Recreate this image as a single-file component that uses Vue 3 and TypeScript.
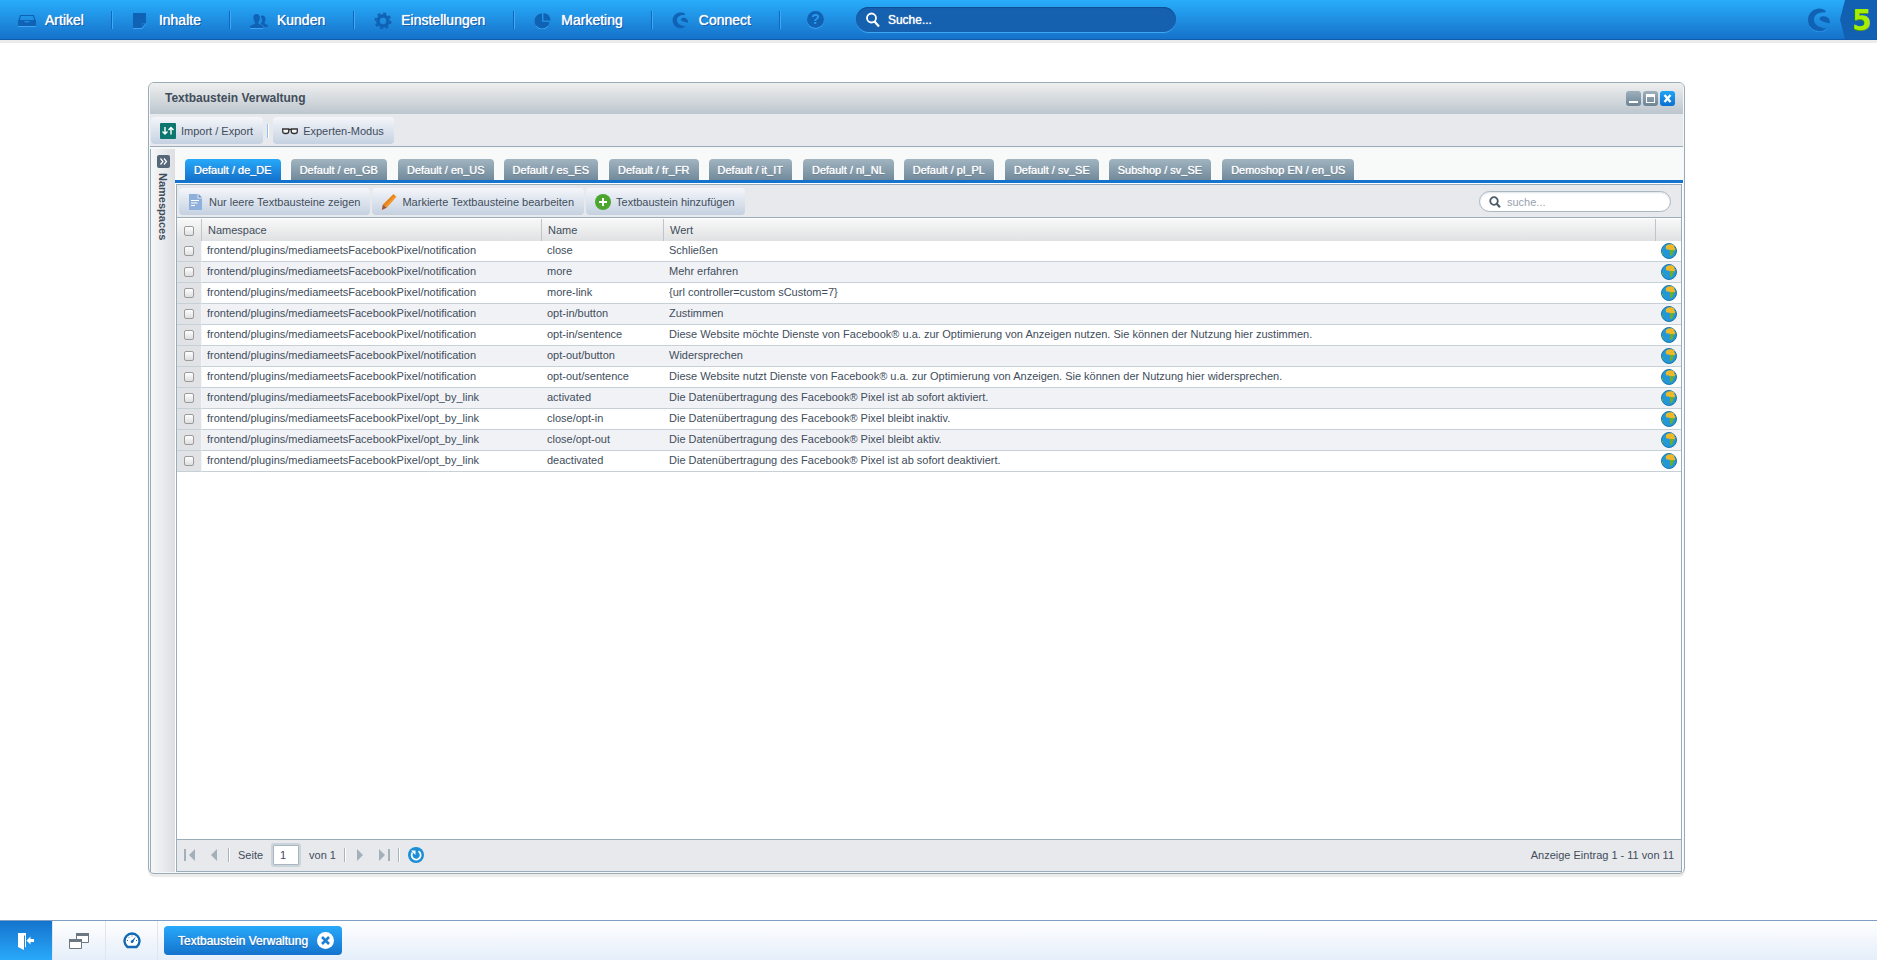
<script setup lang="ts">
import { ref } from 'vue'

interface NavItem {
  label: string
  icon: string
}

interface Snippet {
  namespace: string
  name: string
  value: string
}

const navItems: NavItem[] = [
  { label: 'Artikel', icon: 'inbox' },
  { label: 'Inhalte', icon: 'note' },
  { label: 'Kunden', icon: 'users' },
  { label: 'Einstellungen', icon: 'gear' },
  { label: 'Marketing', icon: 'pie' },
  { label: 'Connect', icon: 'swirl' },
]

const tabs: string[] = [
  'Default / de_DE',
  'Default / en_GB',
  'Default / en_US',
  'Default / es_ES',
  'Default / fr_FR',
  'Default / it_IT',
  'Default / nl_NL',
  'Default / pl_PL',
  'Default / sv_SE',
  'Subshop / sv_SE',
  'Demoshop EN / en_US',
]
const activeTab = ref(0)

const notification = 'frontend/plugins/mediameetsFacebookPixel/notification'
const optByLink = 'frontend/plugins/mediameetsFacebookPixel/opt_by_link'

const snippets: Snippet[] = [
  { namespace: notification, name: 'close', value: 'Schließen' },
  { namespace: notification, name: 'more', value: 'Mehr erfahren' },
  { namespace: notification, name: 'more-link', value: '{url controller=custom sCustom=7}' },
  { namespace: notification, name: 'opt-in/button', value: 'Zustimmen' },
  { namespace: notification, name: 'opt-in/sentence', value: 'Diese Website möchte Dienste von Facebook® u.a. zur Optimierung von Anzeigen nutzen. Sie können der Nutzung hier zustimmen.' },
  { namespace: notification, name: 'opt-out/button', value: 'Widersprechen' },
  { namespace: notification, name: 'opt-out/sentence', value: 'Diese Website nutzt Dienste von Facebook® u.a. zur Optimierung von Anzeigen. Sie können der Nutzung hier widersprechen.' },
  { namespace: optByLink, name: 'activated', value: 'Die Datenübertragung des Facebook® Pixel ist ab sofort aktiviert.' },
  { namespace: optByLink, name: 'close/opt-in', value: 'Die Datenübertragung des Facebook® Pixel bleibt inaktiv.' },
  { namespace: optByLink, name: 'close/opt-out', value: 'Die Datenübertragung des Facebook® Pixel bleibt aktiv.' },
  { namespace: optByLink, name: 'deactivated', value: 'Die Datenübertragung des Facebook® Pixel ist ab sofort deaktiviert.' },
]

const page = ref('1')
</script>

<template>
  <div class="backend">
    <header class="menubar">
      <nav class="menu">
        <a v-for="item in navItems" :key="item.label" class="menu-item" href="#">
          <svg class="menu-icon" viewBox="0 0 18 18" aria-hidden="true">
            <g v-if="item.icon === 'inbox'">
              <path d="M2.500 4.500h13l1.500 5H1z" fill="none" stroke="#1062b5" stroke-width="1.200" />
              <path d="M0 9h5.500c.5 2 1.500 2.500 3.500 2.500S12 11 12.500 9H18v6H0z" fill="#1062b5" />
              <path d="M0 15.500h18" stroke="#3fa5f2" />
            </g>
            <g v-else-if="item.icon === 'note'">
              <path d="M1 2h13v10h-4v5H1z" fill="#1062b5" />
              <path d="M10.500 12.500h3.500L10.500 16.500z" fill="#1062b5" />
              <path d="M1 17.500h9l4-5" fill="none" stroke="#3fa5f2" />
            </g>
            <g v-else-if="item.icon === 'users'" fill="#1062b5">
              <path d="M0 17v-2l4.500-2c.8-.5.8-1.500 0-2.500C2.500 7.500 3 3 6.500 3s4.500 4.500 2.300 7.500c-.8 1-.8 2 0 2.500l4.200 2v2z" />
              <path d="M10.500 5c2.500-1.500 5.500 0 5 4-.2 1.200-1 2-1 3 0 .8 3.500 1.500 3.500 3V16h-4l-.5-1.500-3-1.500c2.300-2.500 2-5.500 0-8z" />
              <path d="M0 17.500h13" stroke="#3fa5f2" />
            </g>
            <g v-else-if="item.icon === 'gear'" fill="none" stroke="#1062b5">
              <circle cx="9" cy="10" r="5" stroke-width="3.500" />
              <circle cx="9" cy="10" r="7.500" stroke-width="2" stroke-dasharray="3 2.890" />
            </g>
            <g v-else-if="item.icon === 'pie'" fill="#1062b5">
              <path d="M8 2.500a7.500 7.500 0 1 0 7.500 8.500H8z" />
              <path d="M9.500 2a7.500 7.500 0 0 1 7 7.500h-7z" />
              <path d="M2 15a7.500 7.500 0 0 0 12 0" fill="none" stroke="#3fa5f2" />
            </g>
            <g v-else fill="#1062b5" transform="translate(0 1) scale(.7)">
              <path d="M18.500 2.500A11.300 11.300 0 1 0 19.500 20.500C11 20 7 16 7 11.500S11 4 18.500 4.200z" />
              <path d="M13 9.500c2-2 7-2 9 1.500 1 2 1 3 .8 4.500-2.800-1-7.800-1.500-9.800-3.700-.6-.8-.6-1.600 0-2.300z" />
            </g>
          </svg>
          <span>{{ item.label }}</span>
        </a>
        <a class="menu-help" href="#" aria-label="Hilfe"><span class="help-mark">?</span></a>
      </nav>
      <label class="global-search">
        <svg viewBox="0 0 16 16" width="16" height="16" aria-hidden="true">
          <circle cx="6.500" cy="6" r="4.500" fill="none" stroke="#fff" stroke-width="1.800" />
          <path d="M9.500 9.500l4.500 5" stroke="#fff" stroke-width="2.200" />
        </svg>
        <input type="text" placeholder="Suche..." aria-label="Suche" />
      </label>
      <svg class="brand-swirl" viewBox="0 0 24 24" aria-hidden="true">
        <path d="M3 19c4 5 10 6 16.500 2.500" fill="none" stroke="#2d97ea" />
        <path d="M18.500 2.500A11.300 11.300 0 1 0 19.500 20.500C11 20 7 16 7 11.500S11 4 18.500 4.200z" fill="#1062b5" />
        <path d="M13 9.500c2-2 7-2 9 1.500 1 2 1 3 .8 4.500-2.800-1-7.800-1.500-9.800-3.700-.6-.8-.6-1.600 0-2.300z" fill="#1062b5" />
      </svg>
      <div class="brand-five">5</div>
    </header>

    <main class="desktop">
      <section class="window">
        <div class="titlebar">
          <h1>Textbaustein Verwaltung</h1>
          <div class="window-tools">
            <button type="button" aria-label="Minimieren">
              <svg viewBox="0 0 15 15"><path d="M3 11h9" stroke="#fff" stroke-width="2" /></svg>
            </button>
            <button type="button" aria-label="Maximieren">
              <svg viewBox="0 0 15 15"><path d="M3 3h9v9H3zM4 6h7v5H4z" fill="#fff" fill-rule="evenodd" /></svg>
            </button>
            <button type="button" class="close" aria-label="Schließen">
              <svg viewBox="0 0 15 15"><path d="M4.500 4l6 7M10.500 4l-6 7" stroke="#fff" stroke-width="2.400" /></svg>
            </button>
          </div>
        </div>

        <div class="toolbar main-toolbar">
          <button type="button" class="tool">
            <svg viewBox="0 0 16 16" aria-hidden="true">
              <rect width="16" height="16" rx="1" fill="#0c766f" />
              <path d="M5 4v7M2.500 8.500L5 11l2.500-2.500M11 11.500V4.500M8.500 7L11 4.500 13.500 7" fill="none" stroke="#fff" stroke-width="1.400" />
            </svg>
            <span>Import / Export</span>
          </button>
          <span class="tool-divider"></span>
          <button type="button" class="tool">
            <svg viewBox="0 0 16 16" aria-hidden="true">
              <path d="M.7 6h6v2.500c0 1.300-1 2-2.500 2h-1C1.700 10.500.7 9.800.7 8.500zM9.300 6h6v2.500c0 1.300-1 2-2.500 2h-1c-1.500 0-2.500-.7-2.500-2zM6.500 7.200c.8-.7 2.200-.7 3 0" fill="#f4f6f8" stroke="#333" stroke-width="1.300" />
            </svg>
            <span>Experten-Modus</span>
          </button>
        </div>

        <div class="window-body">
          <aside class="side">
            <button type="button" class="expand" aria-label="Namespaces ausklappen">
              <svg viewBox="0 0 13 13"><path d="M3.500 3.500L6 6.500 3.500 9.500M7 3.500L9.500 6.500 7 9.500" fill="none" stroke="#fff" stroke-width="1.200" /></svg>
            </button>
            <span class="side-title">Namespaces</span>
          </aside>

          <div class="content">
            <div class="tabs" role="tablist">
              <button
                v-for="(tab, index) in tabs"
                :key="tab"
                type="button"
                role="tab"
                class="tab"
                :class="{ active: index === activeTab }"
                :aria-selected="index === activeTab"
                @click="activeTab = index"
              >{{ tab }}</button>
            </div>

            <div class="grid-panel">
              <div class="toolbar">
                <button type="button" class="tool">
                  <svg viewBox="0 0 16 16" aria-hidden="true">
                    <path d="M1 0h8.500v4.500H14V16H1z" fill="#8fb0da" />
                    <path d="M10.500 0L14 3.500h-3.500z" fill="#6f96c8" />
                    <path d="M3 6.500h8M3 9h6.500M3 11.500h4" stroke="#fff" stroke-width="1.200" />
                  </svg>
                  <span>Nur leere Textbausteine zeigen</span>
                </button>
                <button type="button" class="tool">
                  <svg viewBox="0 0 16 16" aria-hidden="true">
                    <path d="M12.500.2l3 2.500-9.700 11-4-3z" fill="#f0952b" />
                    <path d="M12.500.2l1.300 1.100-10 11-2-1.600z" fill="#e5841d" />
                    <path d="M1.800 10.700l4 3L.8 16z" fill="#9a5330" />
                  </svg>
                  <span>Markierte Textbausteine bearbeiten</span>
                </button>
                <button type="button" class="tool">
                  <svg viewBox="0 0 16 16" aria-hidden="true">
                    <circle cx="8" cy="8" r="8" fill="#4ca52d" />
                    <path d="M8 4v8M4 8h8" stroke="#fff" stroke-width="2" />
                  </svg>
                  <span>Textbaustein hinzufügen</span>
                </button>
                <label class="grid-search">
                  <svg viewBox="0 0 12 12" aria-hidden="true">
                    <circle cx="5" cy="5" r="3.800" fill="none" stroke="#4d5c69" stroke-width="1.800" />
                    <path d="M7.500 7.500l3.500 3.700" stroke="#4d5c69" stroke-width="2.200" />
                  </svg>
                  <input type="text" placeholder="suche..." aria-label="Textbausteine suchen" />
                </label>
              </div>

              <div class="table-area">
                <table>
                  <thead>
                    <tr>
                      <th class="col-check"><input type="checkbox" aria-label="Alle auswählen" /></th>
                      <th class="col-namespace">Namespace</th>
                      <th class="col-name">Name</th>
                      <th>Wert</th>
                      <th class="col-action"></th>
                    </tr>
                  </thead>
                  <tbody>
                    <tr v-for="row in snippets" :key="row.namespace + row.name">
                      <td class="col-check"><input type="checkbox" :aria-label="row.name + ' auswählen'" /></td>
                      <td>{{ row.namespace }}</td>
                      <td>{{ row.name }}</td>
                      <td>{{ row.value }}</td>
                      <td class="col-action">
                        <button type="button" class="globe" aria-label="Übersetzen">
                          <svg viewBox="0 0 16 16">
                            <circle cx="8" cy="8" r="7.500" fill="#2299d6" stroke="#1b74a8" />
                            <path d="M5 3l2-1.500 4-.3 2 1.300.5 2.500 1 .5-1.500 2.500H9.500L8 6.500H5.500L4.800 5z" fill="#efb827" />
                            <path d="M9 7h4.500L12 9.500l-.3 2-1.700 2-1-2zM1 8.500l1.200 1-.4 2.500-.8-2z" fill="#6fae2c" />
                          </svg>
                        </button>
                      </td>
                    </tr>
                  </tbody>
                </table>
              </div>

              <footer class="paging">
                <button type="button" aria-label="Erste Seite">
                  <svg viewBox="0 0 12 12"><path d="M0 0h2v12H0zM11 0v12L5 6z" fill="#a3b0b9" /></svg>
                </button>
                <button type="button" class="prev" aria-label="Vorherige Seite">
                  <svg viewBox="0 0 12 12"><path d="M9 0v12L3 6z" fill="#a3b0b9" /></svg>
                </button>
                <span class="paging-divider"></span>
                <label for="page-number">Seite</label>
                <input id="page-number" v-model="page" type="text" />
                <span>von 1</span>
                <span class="paging-divider"></span>
                <button type="button" class="next" aria-label="Nächste Seite">
                  <svg viewBox="0 0 12 12"><path d="M3 0v12l6-6z" fill="#a3b0b9" /></svg>
                </button>
                <button type="button" aria-label="Letzte Seite">
                  <svg viewBox="0 0 12 12"><path d="M1 0v12l6-6zM10 0h2v12h-2z" fill="#a3b0b9" /></svg>
                </button>
                <span class="paging-divider"></span>
                <button type="button" class="refresh" aria-label="Aktualisieren">
                  <svg viewBox="0 0 16 16">
                    <circle cx="8" cy="8" r="8" fill="#1a8fd6" />
                    <path d="M10.500 4.300a4.500 4.500 0 1 1-6 1.200" fill="none" stroke="#fff" stroke-width="1.800" />
                    <path d="M3 3.500h4.500V8z" fill="#fff" />
                  </svg>
                </button>
                <span class="paging-info">Anzeige Eintrag 1 - 11 von 11</span>
              </footer>
            </div>
          </div>
        </div>
      </section>
    </main>

    <footer class="taskbar">
      <button type="button" class="logout" aria-label="Abmelden">
        <svg viewBox="0 0 16 18">
          <path d="M0 1h8v14l-2 .5V18l-6-3z" fill="#fff" />
          <path d="M6.500 3.500V17" stroke="#1f8fe6" />
          <path d="M8.500 8.500l4-4V7H16v3h-3.500v2.500z" fill="#fff" />
        </svg>
      </button>
      <button type="button" class="task-tool" aria-label="Fenster anordnen">
        <svg viewBox="0 0 20 16" width="20" height="16">
          <path d="M7.500.5h12v9h-12z" fill="#fff" stroke="#6b7884" />
          <path d="M7 0h13v3H7z" fill="#6b7884" />
          <path d="M.5 6.500h12v9H.5z" fill="#fff" stroke="#6b7884" />
          <path d="M0 6h13v3H0z" fill="#6b7884" />
        </svg>
      </button>
      <button type="button" class="task-tool" aria-label="Dashboard">
        <svg viewBox="0 0 18 17" width="18" height="17">
          <path d="M4.500 15A7.500 7.500 0 1 1 13.500 15z" fill="#fff" stroke="#1367b3" stroke-width="2.400" />
          <path d="M4 8.500h1M5.500 5l.7.7M9 3.500v1M13 8.500h1" stroke="#1367b3" />
          <path d="M12.800 4.800L10 10.500 8.200 9z" fill="#1367b3" />
          <circle cx="9" cy="9.800" r="1.300" fill="#1367b3" />
        </svg>
      </button>
      <button type="button" class="task">
        <span>Textbaustein Verwaltung</span>
        <svg viewBox="0 0 17 17" aria-hidden="true">
          <circle cx="8.500" cy="8.500" r="8.500" fill="#fff" />
          <path d="M5 5l7 7M12 5l-7 7" stroke="#1b7fd6" stroke-width="2.600" />
        </svg>
      </button>
    </footer>
  </div>
</template>

<style>
body {
  margin: 0;
}
</style>

<style scoped>
.backend {
  display: flex;
  flex-direction: column;
  min-height: 100vh;
  background: #fff;
  color: #414d5b;
  font-family: "Liberation Sans", Arial, sans-serif;
  font-size: 11px;
  line-height: 16px;
}

.backend * {
  box-sizing: border-box;
}

button,
input {
  margin: 0;
  padding: 0;
  border: 0;
  background: none;
  color: inherit;
  font: inherit;
}

button {
  cursor: pointer;
}

input:focus {
  outline: none;
}

svg {
  display: block;
  flex: none;
}

/* Top menu */
.menubar {
  display: flex;
  align-items: center;
  flex: none;
  height: 40px;
  margin-bottom: 3px;
  background: linear-gradient(#29acfa, #1572ca);
  border-bottom: 1px solid #0e5cab;
  box-shadow: 0 3px 0 #ebebeb;
}

.menu {
  display: flex;
  align-items: center;
}

.menu-item {
  display: flex;
  align-items: center;
  gap: 9px;
  height: 18px;
  padding: 0 27px 0 18px;
  border-right: 1px solid #1268bd;
  box-shadow: 1px 0 0 #40a9f4;
  color: #fff;
  font-size: 14px;
  text-decoration: none;
  text-shadow: 0 0 1px #fff, 1px 1px 0 #0d519a;
}

.menu-item + .menu-item {
  padding: 0 28px 0 20px;
}

.menu-icon {
  width: 18px;
  height: 18px;
}

.menu-help {
  margin: 0 32px 0 27px;
  text-decoration: none;
}

.help-mark {
  display: block;
  width: 17px;
  height: 17px;
  border-radius: 50%;
  background: #1062b5;
  box-shadow: 0 1px 0 #3fa5f2;
  color: #2a9bee;
  font-size: 14px;
  font-weight: bold;
  line-height: 17px;
  text-align: center;
}

.global-search {
  display: flex;
  align-items: center;
  gap: 7px;
  width: 320px;
  height: 25px;
  padding: 0 9px;
  border-radius: 13px;
  background: #1661af;
  box-shadow: inset 0 1px 1px #104d92, 0 1px 0 #3da5f3;
}

.global-search input {
  flex: 1;
  min-width: 0;
  color: #fff;
  font-size: 12px;
  text-shadow: 0 0 1px #fff;
}

.global-search input::placeholder {
  color: #fff;
  opacity: 1;
}

.brand-swirl {
  width: 24px;
  height: 24px;
  margin-left: auto;
  margin-right: 9px;
}

.brand-five {
  width: 37px;
  height: 39px;
  padding-left: 12px;
  background: #1160b1;
  clip-path: polygon(5px 0, 100% 0, 100% 100%, 5px 100%, 0 50%);
  color: #a6ee00;
  font-family: "DejaVu Sans", sans-serif;
  font-size: 28px;
  font-weight: bold;
  line-height: 41px;
  text-shadow: 0 1px 0 #5f9d10;
}

/* Window frame */
.desktop {
  display: flex;
  flex: 1;
  padding: 39px 192px 46px 148px;
}

.window {
  display: flex;
  flex: 1;
  flex-direction: column;
  min-width: 0;
  padding: 0 1px 1px;
  border: 1px solid #9aacb8;
  border-radius: 6px;
  background: #f5f8f8;
  box-shadow: 0 3px 1px #ebebe9;
}

.titlebar {
  display: flex;
  align-items: center;
  justify-content: space-between;
  height: 31px;
  padding: 0 8px 0 15px;
  border-radius: 4px 4px 0 0;
  background: linear-gradient(#efefef, #bcc6ce);
}

.titlebar h1 {
  margin: 0;
  padding-bottom: 1px;
  font-size: 12px;
  font-weight: bold;
}

.window-tools {
  display: flex;
  gap: 2px;
}

.window-tools button {
  width: 15px;
  height: 15px;
  border-radius: 3px;
  background: linear-gradient(#9db0bd, #6d8495);
}

.window-tools .close {
  background: linear-gradient(#20a4fa, #0a6fd0);
}

.toolbar {
  display: flex;
  align-items: center;
  gap: 2px;
  height: 33px;
  padding: 1px 2px 0;
  border-bottom: 1px solid #9aacb8;
  background: #e8e9ed;
}

.main-toolbar {
  gap: 4px;
  padding: 1px 1px 0;
  margin-bottom: 2px;
}

.tool {
  display: flex;
  align-items: center;
  gap: 5px;
  height: 27px;
  padding: 0 10px 0 9px;
  border-radius: 4px;
  background: linear-gradient(#f4f6fa, #c5d1e1);
  white-space: nowrap;
}

.tool svg {
  width: 16px;
  height: 16px;
}

.tool-divider {
  width: 2px;
  height: 14px;
  border-left: 1px solid #8fbff8;
  background: #fff;
}

.window-body {
  display: flex;
  flex: 1;
}

.side {
  display: flex;
  flex-direction: column;
  align-items: center;
  gap: 5px;
  width: 25px;
  padding-top: 6px;
  border-left: 1px solid #9aacb8;
  background: linear-gradient(90deg, #f6f7f8, #dddee2);
}

.expand {
  width: 13px;
  height: 13px;
  border-radius: 2px;
  background: #566779;
}

.side-title {
  font-weight: bold;
  line-height: 16px;
  writing-mode: vertical-rl;
}

.content {
  display: flex;
  flex: 1;
  flex-direction: column;
  min-width: 0;
  background: #fff;
}

/* Shop tabs */
.tabs {
  display: flex;
  gap: 10px;
  height: 34px;
  padding: 10px 10px 0;
  border-bottom: 3px solid #1473cd;
  background: #f8faf9;
}

.tab {
  height: 21px;
  padding: 0 9px;
  border-radius: 4px 4px 0 0;
  background: linear-gradient(#a1b4c0, #718a9b);
  color: #fff;
  text-shadow: 0 0 1px #fff, 0 1px 0 #5f7685;
  white-space: nowrap;
}

.tab:nth-child(even) {
  margin-right: 1px;
}

.tab.active {
  background: linear-gradient(#27a9fa, #1473cd);
  text-shadow: 0 0 1px #fff, 0 1px 0 #0d5cab;
}

.grid-panel {
  display: flex;
  flex: 1;
  flex-direction: column;
  margin: 1px 1px 0;
  border: 1px solid #9aacb8;
}

.grid-search {
  display: flex;
  align-items: center;
  gap: 6px;
  width: 192px;
  height: 21px;
  margin-left: auto;
  margin-right: 8px;
  padding: 0 9px;
  border: 1px solid #a9b7c1;
  border-radius: 11px;
  background: #fff;
  box-shadow: inset 0 1px 2px #dfe3e7;
}

.grid-search svg {
  width: 12px;
  height: 12px;
}

.grid-search input {
  flex: 1;
  min-width: 0;
}

.grid-search input::placeholder {
  color: #97a2b0;
  opacity: 1;
}

/* Snippet table */
.table-area {
  flex: 1;
  padding-top: 1px;
  background: #fff;
}

table {
  width: 100%;
  border-collapse: separate;
  border-spacing: 0;
  table-layout: fixed;
}

th {
  height: 22px;
  padding: 0 6px;
  border-right: 1px solid #c0c4c8;
  background: linear-gradient(#f8f8f8, #e0e1e3);
  font-weight: normal;
  text-align: left;
}

th:last-child {
  border-right: 0;
}

td {
  height: 21px;
  padding: 0 5px 2px;
  border-bottom: 1px solid #c5d0d7;
  line-height: 15px;
  overflow: hidden;
  white-space: nowrap;
}

tbody tr:nth-child(even) {
  background: #f1f2f6;
}

.col-check {
  width: 25px;
  padding: 2px 0 0 7px;
}

td.col-check {
  padding-top: 0;
  border-right: 1px solid #f4f5f7;
  background: #e1e2e5;
}

.col-namespace {
  width: 340px;
}

.col-name {
  width: 122px;
}

.col-action {
  width: 25px;
  padding: 0 5px;
}

input[type="checkbox"] {
  display: block;
  width: 10px;
  height: 10px;
  border: 1px solid #9b9b9b;
  border-radius: 2px;
  background: linear-gradient(#fff, #dedede);
  appearance: none;
}

input[type="checkbox"]:checked {
  background: #1473cd;
}

.globe {
  display: block;
}

.globe svg {
  width: 16px;
  height: 16px;
}

/* Paging */
.paging {
  display: flex;
  align-items: center;
  gap: 8px;
  height: 32px;
  padding: 0 7px 2px;
  border-top: 1px solid #9aacb8;
  background: #e8e9ed;
}

.paging svg {
  width: 12px;
  height: 12px;
}

.paging .prev {
  margin-left: 4px;
}

.paging .next {
  margin-right: 4px;
}

.paging .refresh svg {
  width: 16px;
  height: 16px;
}

.paging-divider {
  width: 2px;
  height: 14px;
  border-left: 1px solid #a9b3bb;
  background: #fff;
}

.paging input {
  width: 30px;
  height: 24px;
  padding: 0 7px;
  border: 2px solid #cbd4da;
  border-radius: 3px;
  background: #fff;
  box-shadow: inset 0 0 0 1px #aab7c0;
}

.paging-info {
  margin-left: auto;
}

/* Taskbar */
.taskbar {
  display: flex;
  align-items: center;
  flex: none;
  height: 40px;
  border-top: 1px solid #7f9fc6;
  background: linear-gradient(#fff, #e5eefa);
}

.logout {
  display: flex;
  align-items: center;
  justify-content: center;
  width: 52px;
  height: 39px;
  background: linear-gradient(#1473cd, #29a9fa);
}

.logout svg {
  width: 16px;
  height: 18px;
}

.task-tool {
  display: flex;
  align-items: center;
  justify-content: center;
  width: 53px;
  height: 39px;
  border-left: 1px solid #dfe6ef;
}

.task-tool + .task-tool {
  border-right: 1px solid #dfe6ef;
}

.task {
  display: flex;
  align-items: center;
  justify-content: space-between;
  gap: 9px;
  height: 29px;
  margin-left: 6px;
  padding: 0 8px 0 14px;
  border-radius: 4px;
  background: linear-gradient(#27a9fa, #1473cd);
  color: #fff;
  font-size: 12px;
  text-shadow: 0 0 1px #fff, 0 1px 1px #0b4b8e;
}

.task svg {
  width: 17px;
  height: 17px;
}
</style>
